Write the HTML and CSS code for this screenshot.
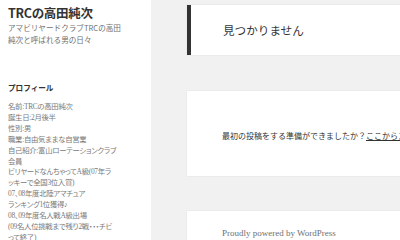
FILE: index.html
```html
<!DOCTYPE html>
<html>
	<head>
		<title>TRCの高田純次</title>
		<link rel="stylesheet" href="styles.css">
	</head>
	<body>
		<div class="page">
			<div class="sidebar">
				<h1 class="site-title">TRCの高田純次</h1>
				<p class="site-desc">アマビリヤードクラブTRCの高田<br>純次と呼ばれる男の日々</p>
				<h2 class="widget-title">プロフィール</h2>
				<div class="profile">
					名前:TRCの高田純次<br>
					誕生日:2月後半<br>
					性別:男<br>
					職業:自由気ままな自営業<br>
					自己紹介:富山ローテーションクラブ<br>
					会員<br>
					ビリヤードなんちゃってA級(07年ラ<br>
					ッキーで全国3位入賞)<br>
					07、08年度北陸アマチュア<br>
					ランキング1位獲得♪<br>
					08、09年度名人戦A級出場<br>
					(09名人位挑戦まで残り2戦・・・チビ<br>
					って終了)
				</div>
			</div>
			<div class="main">
				<div class="page-header">
					<h1 class="page-title">見つかりません</h1>
				</div>
				<div class="content-box">
					<p>最初の投稿をする準備ができましたか？<a href="#">ここからスタート</a>。</p>
				</div>
				<div class="footer">
					<a href="#">Proudly powered by WordPress</a>
				</div>
			</div>
		</div>
	</body>
</html>
```

FILE: styles.css
```css
body {
	margin: 0;
	background-color: #f1f1f1;
	color: #333;
	font-family: "Liberation Serif", "Noto Sans CJK JP", serif;
	overflow: hidden;
}

.page {
	display: flex;
	height: 240px;
}

.sidebar {
	width: 143px;
	flex-shrink: 0;
	background-color: #fff;
	padding: 4px 0 0 8px;
	white-space: nowrap;
	overflow: hidden;
}

.site-title {
	margin: 0;
	font-family: "Noto Sans CJK JP", sans-serif;
	font-size: 12.5px;
	font-weight: bold;
	line-height: 18px;
	letter-spacing: -0.3px;
	color: #333;
}

.site-desc {
	margin: 0;
	font-family: "Noto Sans CJK JP", sans-serif;
	font-size: 7.6px;
	line-height: 12px;
	color: #707070;
}

.widget-title {
	margin: 36px 0 0;
	font-family: "Noto Sans CJK JP", sans-serif;
	font-size: 7.6px;
	font-weight: bold;
	line-height: 12px;
	color: #333;
}

.profile {
	margin-top: 8px;
	font-size: 7.4px;
	line-height: 10.9px;
	letter-spacing: -0.3px;
	color: #7a7a7a;
	font-feature-settings: "palt";
}

.main {
	flex: 1;
	padding: 5px 0 0 36px;
	min-width: 0;
	overflow: hidden;
}

.page-header {
	background-color: #fff;
	border-left: 4px solid #333;
	height: 50px;
	display: flex;
	align-items: center;
	padding-left: 32px;
	box-shadow: 0 0 1px rgba(0, 0, 0, 0.15);
}

.page-title {
	margin: 0;
	font-family: "Noto Sans CJK JP", sans-serif;
	font-size: 11.6px;
	font-weight: normal;
	color: #333;
	white-space: nowrap;
}

.content-box {
	margin-top: 36px;
	height: 85px;
	background-color: #fff;
	display: flex;
	align-items: center;
	padding-left: 35px;
	white-space: nowrap;
	box-shadow: 0 0 1px rgba(0, 0, 0, 0.15);
}

.content-box p {
	margin: 4px 0 0;
	font-family: "Noto Sans CJK JP", sans-serif;
	font-size: 8px;
	color: #333;
}

.content-box a {
	color: #333;
	text-decoration: underline;
}

.footer {
	margin-top: 35px;
	height: 40px;
	background-color: #fff;
	padding: 16px 0 0 35px;
	font-size: 9px;
	line-height: 12px;
	box-shadow: 0 0 1px rgba(0, 0, 0, 0.15);
}

.footer a {
	color: #707070;
	text-decoration: none;
}
```
